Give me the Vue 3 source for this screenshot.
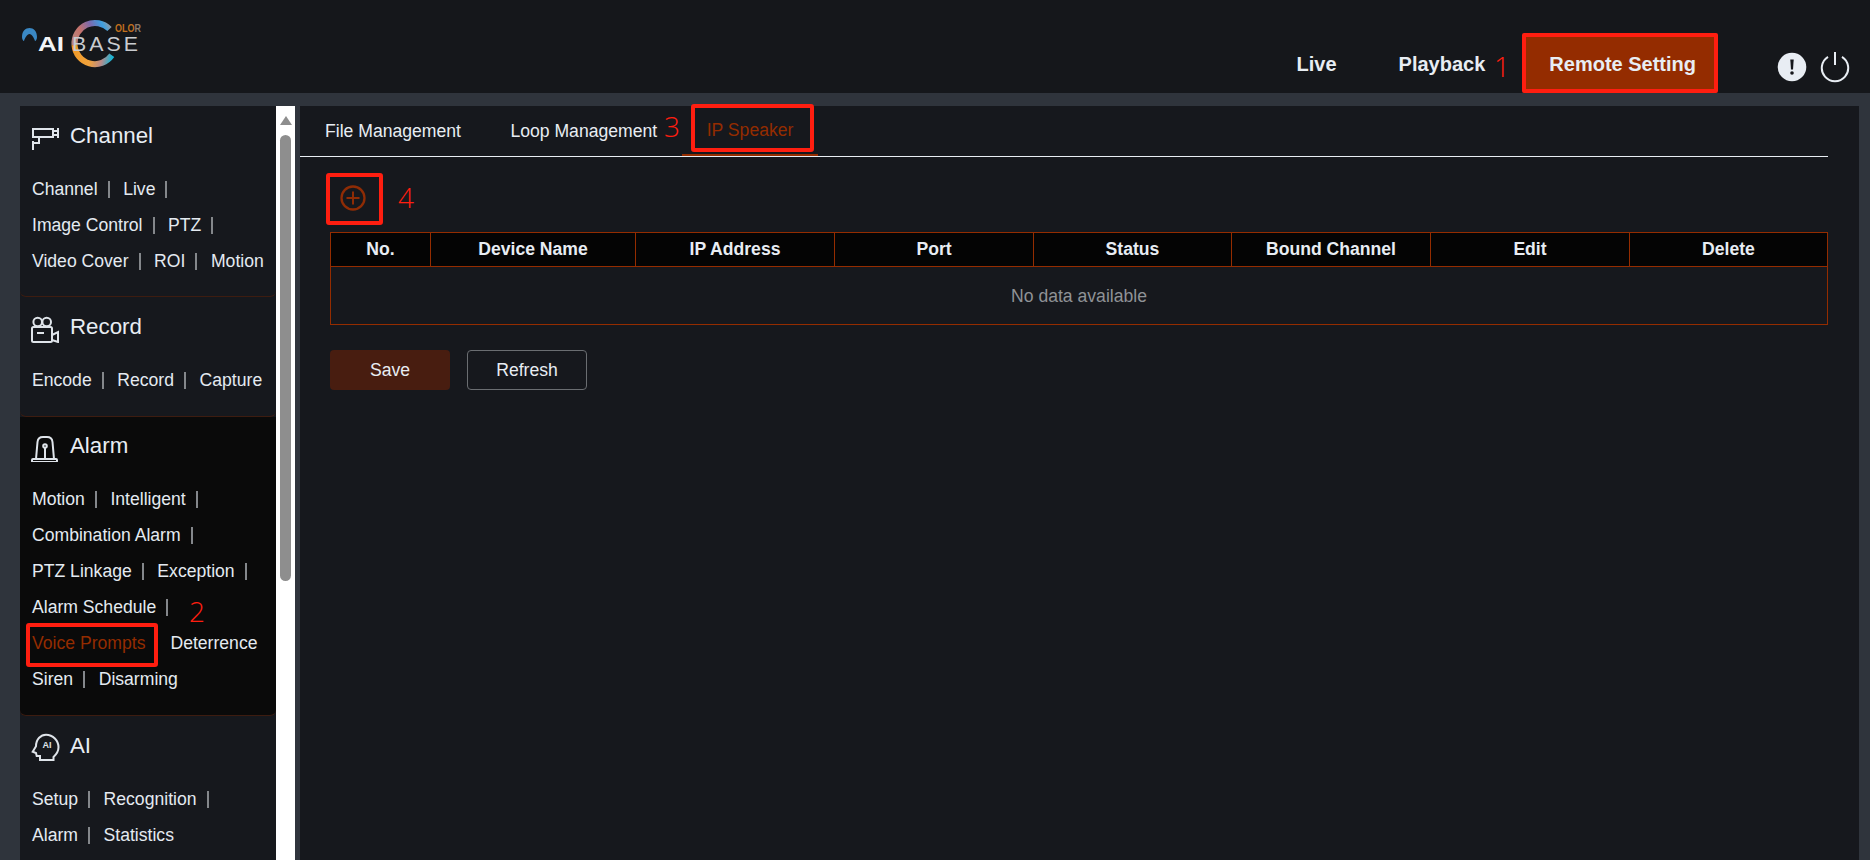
<script setup>
const sections = [
  { key: 'channel', title: 'Channel', rows: [['Channel', 'Live'], ['Image Control', 'PTZ'], ['Video Cover', 'ROI', 'Motion!']] },
  { key: 'record', title: 'Record', rows: [['Encode', 'Record', 'Capture!']] },
  { key: 'alarm', title: 'Alarm', active: true, rows: [['Motion', 'Intelligent'], ['Combination Alarm'], ['PTZ Linkage', 'Exception'], ['Alarm Schedule'], ['Voice Prompts', 'Deterrence'], ['Siren', 'Disarming!']] },
  { key: 'ai', title: 'AI', rows: [['Setup', 'Recognition'], ['Alarm', 'Statistics!']] },
]
const columns = ['No.', 'Device Name', 'IP Address', 'Port', 'Status', 'Bound Channel', 'Edit', 'Delete']
const label = (s) => s.replace('!', '')
const hasSep = (s) => !s.endsWith('!')
</script>

<template>
  <div class="page">
    <header class="header">
      <svg class="logo" width="160" height="80" viewBox="0 0 160 80">
        <defs>
          <linearGradient id="ringTop" x1="74" y1="45" x2="110" y2="26" gradientUnits="userSpaceOnUse">
            <stop offset="0" stop-color="#b8877f" />
            <stop offset="0.3" stop-color="#c5726b" />
            <stop offset="0.6" stop-color="#7a6bb0" />
            <stop offset="0.85" stop-color="#3b9fe0" />
            <stop offset="1" stop-color="#8a9aa8" />
          </linearGradient>
          <linearGradient id="ringBottom" x1="74" y1="50" x2="112" y2="58" gradientUnits="userSpaceOnUse">
            <stop offset="0" stop-color="#f09a28" />
            <stop offset="0.45" stop-color="#f0a23c" />
            <stop offset="0.75" stop-color="#b88a8a" />
            <stop offset="1" stop-color="#18b4d4" />
          </linearGradient>
        </defs>
        <path d="M22 37 C22 31 25.5 28 29.5 28 C33.5 28 37 31 37 37 C37 39 36 41 35 41 C34 38 32 34 29.5 34 C27 34 25 38 24 41 C23 41 22 39 22 37 Z" fill="#3a88c4" />
        <path d="M74.5 45 A20.5 20.5 0 0 1 109.5 29" fill="none" stroke="url(#ringTop)" stroke-width="6" />
        <path d="M74.5 45 A20.5 20.5 0 0 0 111.8 55.3" fill="none" stroke="url(#ringBottom)" stroke-width="6" />
        <text x="38" y="51" class="logo-ai" textLength="26" lengthAdjust="spacingAndGlyphs">AI</text>
        <text x="72" y="51" class="logo-base" textLength="69" lengthAdjust="spacingAndGlyphs">BASE</text>
        <text x="115" y="32" class="logo-olor" textLength="26" lengthAdjust="spacingAndGlyphs">OLO<tspan class="logo-r">R</tspan></text>
      </svg>
      <nav class="nav">
        <a class="nav-item">Live</a>
        <a class="nav-item">Playback</a>
        <a class="nav-item nav-active">Remote Setting</a>
      </nav>
      <div class="tools">
        <svg width="30" height="30" viewBox="0 0 30 30">
          <circle cx="15" cy="15" r="14.3" fill="#e8edf3" />
          <path d="M13.3 7.5 h3.4 l-.7 10 h-2 Z" fill="#15171b" />
          <circle cx="15" cy="21" r="1.8" fill="#15171b" />
        </svg>
        <svg width="30" height="32" viewBox="0 0 30 32">
          <path d="M8 5.8 A13.2 13.2 0 1 0 22 5.8" fill="none" stroke="#e8edf3" stroke-width="2" />
          <path d="M15 1 V14" fill="none" stroke="#e8edf3" stroke-width="2" />
        </svg>
      </div>
    </header>

    <div class="body">
      <aside class="sidebar">
        <section v-for="s in sections" :key="s.key" class="section" :class="[`section-${s.key}`, { 'section-active': s.active }]">
          <div class="section-title">
            <svg v-if="s.key === 'channel'" class="icon" viewBox="0 0 32 32">
              <path d="M3 9 H23 V17 H3 Z M23 11 H27 M23 15 H27 M28 8 V18 M9 17 V23 H3 M3 21 V30" />
            </svg>
            <svg v-else-if="s.key === 'record'" class="icon" viewBox="0 0 32 32">
              <circle cx="7.7" cy="11" r="4.3" />
              <circle cx="16.7" cy="11" r="4.3" />
              <rect x="2" y="16" width="20" height="15" rx="1.5" />
              <path d="M7 22 H14 M22 24 L28 21 V31 L22 29" />
            </svg>
            <svg v-else-if="s.key === 'alarm'" class="icon" viewBox="0 0 32 32">
              <path d="M6 29 L7.5 12 Q8 7 13 7 H17 Q22 7 22.5 12 L24 29" />
              <rect x="2" y="29" width="25" height="3" rx="1" />
              <circle cx="15" cy="16" r="1.8" />
              <path d="M15 18 V29" />
            </svg>
            <svg v-else class="icon" viewBox="0 0 32 32">
              <path d="M10 30 V26 H6.7 L6 23 L2.7 21.7 L6 16.3 C6 9 11 4.7 16 4.7 C23 4.7 28.5 10.7 28.5 17.3 C28.5 22.3 25.7 25 23.5 27 V30 Z" />
              <text x="17" y="18" class="icon-ai">AI</text>
            </svg>
            <span>{{ s.title }}</span>
          </div>
          <div v-for="(row, i) in s.rows" :key="i" class="link-row">
            <template v-for="item in row" :key="item">
              <a class="link" :class="{ 'link-active': item === 'Voice Prompts' }">{{ label(item) }}</a>
              <i v-if="hasSep(item)" class="sep"></i>
            </template>
          </div>
        </section>
      </aside>
      <div class="scrollbar">
        <i class="scroll-arrow"></i>
        <i class="scroll-thumb"></i>
      </div>

      <main class="main">
        <div class="tabs">
          <a class="tab">File Management</a>
          <a class="tab">Loop Management</a>
          <a class="tab tab-active">IP Speaker</a>
        </div>
        <div class="toolbar">
          <svg width="26" height="26" viewBox="0 0 26 26">
            <circle cx="13" cy="13" r="11.5" fill="none" stroke="#8f2c05" stroke-width="2.3" />
            <path d="M13 6.5 V19.5 M6.5 13 H19.5" fill="none" stroke="#8f2c05" stroke-width="2" />
          </svg>
        </div>
        <div class="table">
          <div class="thead">
            <div v-for="c in columns" :key="c" class="th">{{ c }}</div>
          </div>
          <div class="empty">No data available</div>
        </div>
        <div class="actions">
          <button class="btn btn-save">Save</button>
          <button class="btn btn-refresh">Refresh</button>
        </div>
      </main>
    </div>

    <div class="marks">
      <i class="mark mark-voice"></i>
      <i class="mark mark-speaker"></i>
      <i class="mark mark-add"></i>
      <span class="num num-1">1</span>
      <span class="num num-2">2</span>
      <span class="num num-3">3</span>
      <span class="num num-4">4</span>
    </div>
  </div>
</template>

<style>
html, body { margin: 0; background: #2f343c; overflow: hidden; }
</style>

<style scoped>
.page {
  position: relative;
  width: 1870px;
  height: 860px;
  overflow: hidden;
  background: #2f343c;
  color: #e8edf3;
  font-family: "Liberation Sans", Arial, sans-serif;
  font-size: 17.6px;
}
.header {
  display: flex;
  justify-content: flex-end;
  align-items: flex-end;
  height: 93px;
  background: #15171b;
  position: relative;
}
.logo { position: absolute; left: 0; top: 0; }
.logo-ai { font: 700 21px "Liberation Sans", sans-serif; fill: #f2f4f6; }
.logo-base { font: 400 21px "Liberation Sans", sans-serif; fill: #c9ccd0; letter-spacing: 3px; }
.logo-olor { font: 700 10.5px "Liberation Sans", sans-serif; fill: #c2701e; }
.logo-r { fill: #8a7a6a; }
.nav { display: flex; gap: 12px; height: 60px; }
.nav-item {
  display: flex;
  align-items: center;
  padding: 3px 25px 0;
  font-size: 20px;
  font-weight: 700;
  box-sizing: border-box;
}
.nav-active {
  background: #942c00;
  border: 4px solid #ff1e10;
  border-radius: 2px;
  padding: 3px 18px 0 23px;
}
.tools {
  display: flex;
  align-items: center;
  gap: 13px;
  width: 152px;
  height: 60px;
  box-sizing: border-box;
  padding: 8px 0 0 59px;
}
.body {
  display: flex;
  height: 767px;
  padding: 13px 0 0 20px;
  box-sizing: border-box;
}
.sidebar {
  width: 256px;
  flex: none;
  overflow: hidden;
  background: #16181d;
}
.section {
  padding: 12px 12px 17px;
  border-bottom: 1px solid #3d1c10;
  border-radius: 0 0 6px 6px;
}
.section-record { padding-bottom: 18px; }
.section-alarm { padding: 11px 12px 18px; }
.section-active { background: #0a0a0a; }
.section-title {
  display: flex;
  align-items: center;
  height: 36px;
  margin: 0 0 17px -2px;
  font-size: 22.3px;
  gap: 8px;
}
.icon {
  width: 32px;
  height: 32px;
  fill: none;
  stroke: #dfe4ea;
  stroke-width: 2;
}
.icon-ai {
  font: 700 9px "Liberation Sans", sans-serif;
  fill: #dfe4ea;
  stroke: none;
  text-anchor: middle;
}
.link-row {
  display: flex;
  align-items: center;
  height: 36px;
  white-space: nowrap;
}
.link { color: #e4eaf1; }
.link-active { color: #942c00; }
.sep {
  width: 2px;
  height: 17px;
  margin: 0 13.6px 0 10px;
  background: #84878b;
}
.link-active + .sep { margin-right: 15px; }
.scrollbar {
  flex: none;
  width: 19px;
  height: 754px;
  background: #fff;
  display: flex;
  flex-direction: column;
  align-items: center;
}
.scroll-arrow {
  width: 0;
  height: 0;
  margin-top: 10px;
  border: 6.5px solid transparent;
  border-top: 0;
  border-bottom: 9px solid #8e8e8e;
}
.scroll-thumb {
  width: 11px;
  height: 446px;
  margin-top: 10px;
  background: #8e8e8e;
  border-radius: 6px;
}
.main {
  flex: none;
  width: 1559px;
  margin-left: 5px;
  padding: 0 31px 0 0;
  box-sizing: border-box;
  background: #16181d;
}
.tabs {
  display: flex;
  height: 51px;
  border-bottom: 1px solid #e8edf3;
  box-sizing: border-box;
}
.tab {
  display: flex;
  align-items: center;
  padding: 0 24.5px 0 25px;
  height: 50px;
  box-sizing: border-box;
}
.tab-active {
  color: #942c00;
  border-bottom: 2px solid #942c00;
}
.toolbar {
  height: 26px;
  margin: 28px 0 21px 39.5px;
}
.toolbar svg { display: block; }
.table {
  margin-left: 30px;
  border: 1px solid #942c00;
  box-sizing: border-box;
}
.thead {
  display: grid;
  grid-template-columns: 100px 205px 199px 199px 198px 199px 199px 1fr;
  height: 33px;
  background: #040404;
  border-bottom: 1px solid #942c00;
}
.th {
  display: flex;
  align-items: center;
  justify-content: center;
  font-weight: 700;
  border-right: 1px solid #942c00;
}
.th:last-child { border-right: 0; }
.empty {
  display: flex;
  align-items: center;
  justify-content: center;
  height: 57px;
  padding-top: 1px;
  box-sizing: border-box;
  color: #8f9296;
}
.actions {
  display: flex;
  gap: 17px;
  margin: 25px 0 0 30px;
}
.btn {
  width: 120px;
  height: 40px;
  border-radius: 4px;
  font: inherit;
  color: #e8edf3;
  padding: 1px 0 0;
}
.btn-save { background: #481d10; border: 0; }
.btn-refresh { background: transparent; border: 1px solid #6a6d71; }

.marks { position: absolute; inset: 0; pointer-events: none; }
.mark {
  position: absolute;
  border: 4px solid #ff1e10;
  border-radius: 3px;
  box-sizing: border-box;
}
.mark-voice { left: 26px; top: 623px; width: 132px; height: 44px; }
.mark-speaker { left: 691px; top: 104px; width: 123px; height: 48px; }
.mark-add { left: 326px; top: 173px; width: 57px; height: 52px; }
.num {
  position: absolute;
  font: 300 28px/28px "Open Sans", sans-serif;
  color: #ff1e10;
}
.num-1 { left: 1494px; top: 52px; }
.num-2 { left: 189px; top: 597px; }
.num-3 { left: 664px; top: 112px; }
.num-4 { left: 398px; top: 183px; }
</style>
